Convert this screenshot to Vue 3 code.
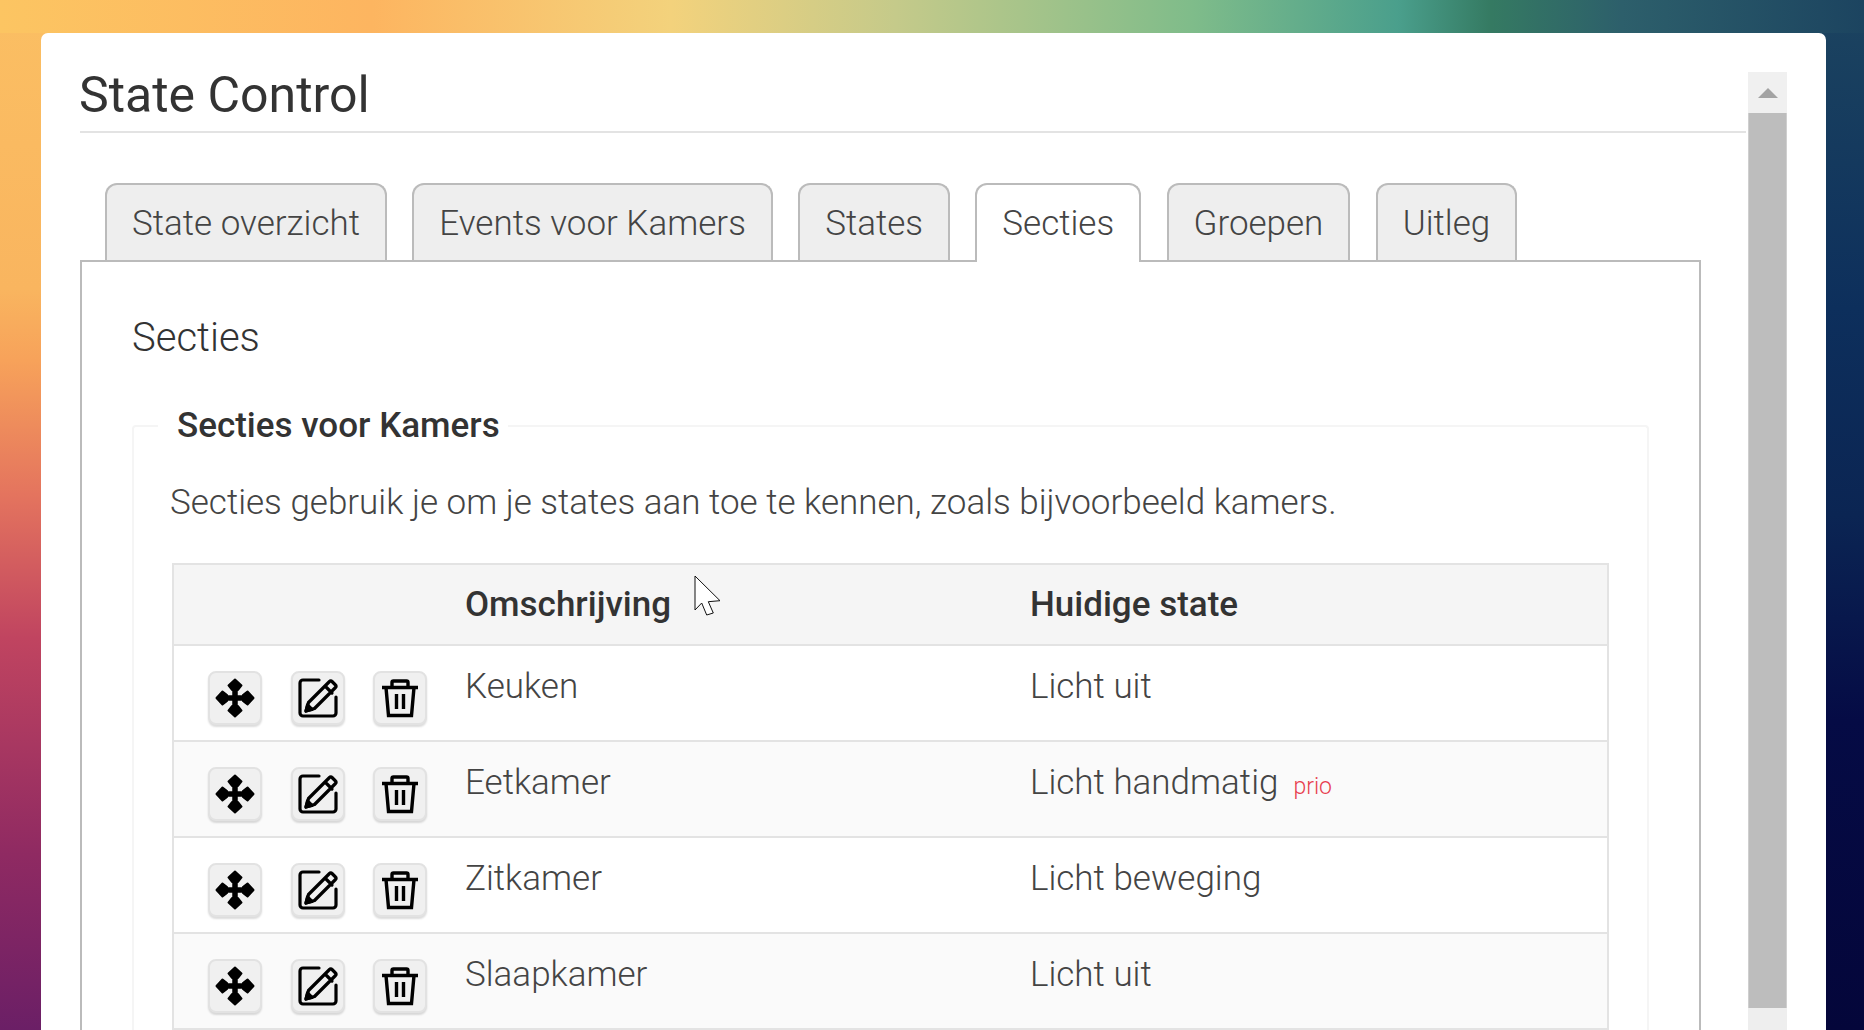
<script setup>
const tabs = ['State overzicht', 'Events voor Kamers', 'States', 'Secties', 'Groepen', 'Uitleg']
const rows = [
  { name: 'Keuken', state: 'Licht uit' },
  { name: 'Eetkamer', state: 'Licht handmatig', prio: true },
  { name: 'Zitkamer', state: 'Licht beweging' },
  { name: 'Slaapkamer', state: 'Licht uit' },
]
</script>

<template>
  <div class="page">
    <section class="card">
      <div class="main">
        <header class="head"><h1>State Control</h1></header>
        <ul class="tabs">
          <li v-for="t in tabs" :key="t" class="tab" :class="{ active: t === 'Secties' }">{{ t }}</li>
        </ul>
        <div class="panel">
          <h2>Secties</h2>
          <fieldset class="box">
            <legend>Secties voor Kamers</legend>
            <p>Secties gebruik je om je states aan toe te kennen, zoals bijvoorbeeld kamers.</p>
            <table>
              <colgroup>
                <col class="c1" />
                <col class="c2" />
                <col />
              </colgroup>
              <thead>
                <tr>
                  <th></th>
                  <th>Omschrijving</th>
                  <th>Huidige state</th>
                </tr>
              </thead>
              <tbody>
                <tr v-for="r in rows" :key="r.name">
                  <td>
                    <div class="btns">
                      <button class="ib" type="button" aria-label="Verplaatsen">
                        <svg width="40" height="40" viewBox="0 0 40 40">
                          <path d="M20 6V34M6 20H34" stroke="#000" stroke-width="5.5" fill="none" />
                          <path d="M20 1.5L26.5 7.5L23 12H17L13.5 7.5ZM20 38.5L26.5 32.5L23 28H17L13.5 32.5ZM1.5 20L7.5 13.5L12 17V23L7.5 26.5ZM38.5 20L32.5 13.5L28 17V23L32.5 26.5Z" fill="#000" stroke="#000" stroke-width="2" stroke-linejoin="round" />
                        </svg>
                      </button>
                      <button class="ib" type="button" aria-label="Bewerken">
                        <svg width="40" height="40" viewBox="0 0 40 40" fill="none" stroke="#000" stroke-width="3.2" stroke-linejoin="round" stroke-linecap="round">
                          <path d="M21 2H5A3 3 0 0 0 2 5V35A3 3 0 0 0 5 38H35A3 3 0 0 0 38 35V19" />
                          <path d="M8 33L10.5 24.5L30 5L31.5 3.5A1.6 1.6 0 0 1 34 3.5L37.5 7A1.6 1.6 0 0 1 37.5 9.5L16.5 30.5ZM27 8L34 15" />
                          <path d="M8 33L9.5 27L14 31.5Z" fill="#000" />
                        </svg>
                      </button>
                      <button class="ib" type="button" aria-label="Verwijderen">
                        <svg width="38" height="40" viewBox="0 0 38 40" fill="none" stroke="#000" stroke-width="3.4">
                          <path d="M1 9.5H37" />
                          <path d="M11 9V4.5A1.5 1.5 0 0 1 12.5 3H25.5A1.5 1.5 0 0 1 27 4.5V9" />
                          <path d="M5 9.5L7.5 37.5H30.5L33 9.5" />
                          <path d="M15.5 16V31M22.5 16V31" />
                        </svg>
                      </button>
                    </div>
                  </td>
                  <td>{{ r.name }}</td>
                  <td>{{ r.state }}<small v-if="r.prio">prio</small></td>
                </tr>
              </tbody>
            </table>
          </fieldset>
        </div>
      </div>
      <div class="scroll" aria-hidden="true">
        <div class="sb-btn"><span class="sb-arrow"></span></div>
        <div class="sb-thumb"></div>
        <div class="sb-track"></div>
      </div>
    </section>
    <svg class="cursor" width="50" height="50" viewBox="0 0 50 50">
      <path d="M15 6L40 30.7L28.3 31.7L33.3 43L26.7 45L21.7 33L15 40Z" fill="#fff" stroke="#111" stroke-width="1" />
    </svg>
  </div>
</template>

<style scoped>
.page {
  position: relative;
  width: 1864px;
  height: 1030px;
  overflow: hidden;
  box-sizing: border-box;
  padding: 33px 38px 0 41px;
  font-family: Roboto, "Liberation Sans", sans-serif;
  font-weight: 300;
  color: #333;
  background-color: #0b2553;
  background-image:
    linear-gradient(to right, #fcc562 0%, #fdb560 20%, #f3d27c 36%, #c5ca8a 48%, #7fbc8a 64%, #4a9f8c 75%, #357a62 80%, #2d5f6b 87%, #1c4460 100%),
    linear-gradient(to bottom, #fbbf63 0%, #f9b55f 28%, #f7a25a 35%, #e4745e 48%, #c04460 62%, #8f2a62 83%, #6b1f66 100%),
    linear-gradient(to bottom, #1c4460 0%, #0d2f5c 30%, #0b2553 50%, #050b45 70%, #04063a 100%);
  background-size: 100% 33px, 50% 100%, 50% 100%;
  background-position: 0 0, 0 0, 100% 0;
  background-repeat: no-repeat;
}
.card {
  display: flex;
  align-items: flex-start;
  height: 997px;
  box-sizing: border-box;
  padding: 0 39px 0 39px;
  background: #fff;
  border-radius: 7px 7px 0 0;
  overflow: hidden;
}
.main {
  flex: 1;
  min-width: 0;
}
.head {
  margin-right: 2px;
  height: 100px;
  box-sizing: border-box;
  border-bottom: 2px solid #e3e3e3;
}
h1 {
  margin: 0 0 0 -1px;
  padding-top: 34px;
  font-size: 50px;
  line-height: 56px;
  font-weight: 400;
  color: #333;
}
.tabs {
  display: flex;
  align-items: flex-start;
  gap: 25.3px;
  list-style: none;
  margin: 50px 0 0;
  padding: 0 0 0 25px;
  position: relative;
  z-index: 1;
}
.tab {
  height: 77px;
  box-sizing: border-box;
  padding: 0 25px;
  line-height: 77px;
  font-size: 35px;
  background: #eee;
  border: 2px solid #bbb;
  border-bottom: 0;
  border-radius: 12px 12px 0 0;
  color: #444;
}
.tab.active {
  height: 79px;
  margin-bottom: -2px;
  background: #fff;
}
.panel {
  margin-right: 47px;
  height: 770px;
  box-sizing: border-box;
  border: 2px solid #bbb;
  border-bottom: 0;
  padding: 0 50px;
}
h2 {
  margin: 0;
  padding-top: 52px;
  font-size: 40px;
  line-height: 48px;
  font-weight: 300;
  color: #333;
}
.box {
  margin: 42px 0 0;
  padding: 0 38px;
  border: 2px solid #f5f5f5;
  border-bottom: 0;
  min-width: 0;
  border-radius: 4px 4px 0 0;
}
legend {
  margin-left: -14px;
  padding: 0 8px 0 19px;
  font-size: 35px;
  line-height: 44px;
  font-weight: 500;
  color: #333;
}
p {
  margin: 33px 0 0 -2px;
  font-size: 35px;
  line-height: 44px;
  color: #444;
}
table {
  width: 100%;
  margin-top: 38px;
  table-layout: fixed;
  border-collapse: collapse;
  border: 2px solid #e3e3e3;
  font-size: 35px;
}
.c1 { width: 272px; }
.c2 { width: 565px; }
th {
  height: 81px;
  box-sizing: border-box;
  padding: 0 20px;
  background: #f5f5f5;
  text-align: left;
  font-weight: 500;
  font-size: 35px;
  color: #333;
  border-bottom: 2px solid #e3e3e3;
}
td {
  height: 96px;
  box-sizing: border-box;
  padding: 19px 20px 0;
  vertical-align: top;
  line-height: 44px;
  border-bottom: 2px solid #e3e3e3;
  color: #444;
}
tbody tr:nth-child(even) td {
  background: #fafafa;
}
td:first-child {
  padding: 25px 0 0 34px;
}
.btns {
  display: flex;
  gap: 28.5px;
}
.ib {
  width: 54px;
  height: 54px;
  box-sizing: border-box;
  padding: 0;
  display: flex;
  align-items: center;
  justify-content: center;
  background: #f0f0f0;
  border: 2px solid #e2e2e2;
  border-radius: 8px;
  box-shadow: 0 2px 2px rgba(0, 0, 0, 0.14);
}
.ib svg {
  flex: none;
}
small {
  margin-left: 15px;
  font-size: 23px;
  color: #e8404f;
}
.scroll {
  flex: none;
  width: 39px;
  margin-top: 39px;
  display: flex;
  flex-direction: column;
  height: 958px;
}
.sb-btn {
  height: 41px;
  background: #f0f0f0;
  display: flex;
  justify-content: center;
  padding-top: 16px;
  box-sizing: border-box;
}
.sb-arrow {
  width: 0;
  height: 0;
  border-left: 10px solid transparent;
  border-right: 10px solid transparent;
  border-bottom: 10px solid #a3a3a3;
}
.sb-thumb {
  flex: 1;
  background: #bdbdbd;
  box-shadow: inset 1px 0 0 #cfcfcf, inset -1px 0 0 #cfcfcf;
}
.sb-track {
  height: 22px;
  background: #eee;
}
.cursor {
  position: absolute;
  left: 680px;
  top: 570px;
}
</style>

<style>
html, body {
  margin: 0;
  overflow: hidden;
}
</style>
